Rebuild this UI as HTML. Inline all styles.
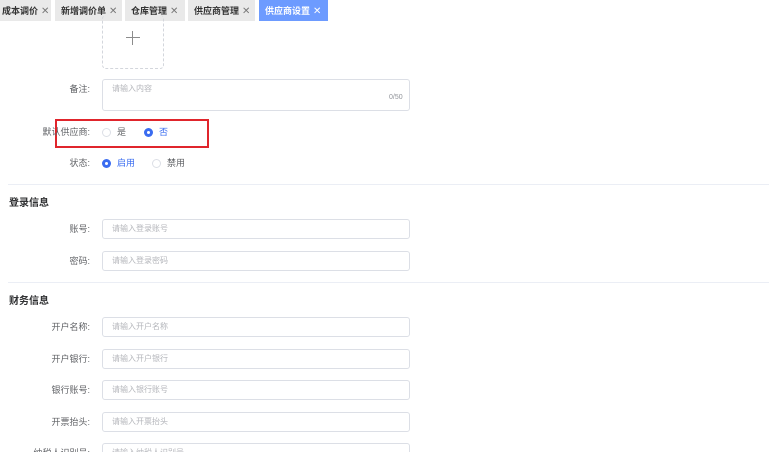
<!DOCTYPE html>
<html><head><meta charset="utf-8"><style>
*{margin:0;padding:0;box-sizing:border-box}
html,body{width:769px;height:452px;overflow:hidden}
body{background:#fff;font-family:"Liberation Sans","Noto Sans CJK SC",sans-serif;font-size:9px;color:#606266;position:relative}
.tabbar{position:absolute;left:0;top:0;width:769px;height:21px;background:#fff}
.tab{position:absolute;top:0;height:21px;background:#e9e9e9;color:#333;font-weight:bold;font-size:9px;line-height:22px;padding-left:6px}
.tab span{font-weight:normal;color:#777;margin-left:3px;font-size:10px}
.tab.act{background:#6d9bff;color:#fff}.tab.act span{color:#fff}
.a{position:absolute}
.lbl{position:absolute;right:679px;text-align:right;white-space:nowrap;color:#606266}
.inp{position:absolute;left:102px;width:308px;height:20px;border:1px solid #dcdfe6;border-radius:3px;color:#b4b6bb;padding-left:9px;line-height:18px;font-size:8px}
.hr{position:absolute;left:8px;right:0;height:1px;background:#ebeef5}
.h{position:absolute;left:9px;font-weight:bold;color:#303133;font-size:10px}
.r{position:absolute;width:9px;height:9px;border-radius:50%;border:1px solid #dcdfe6;background:#fff}
.r.on{border:none;background:#3a6cf0}
.r.on::after{content:"";position:absolute;left:3px;top:3px;width:3px;height:3px;border-radius:50%;background:#fff}
</style></head><body>
<div class="tabbar">
<div class="tab" style="left:-4px;width:55px">成本调价<span>✕</span></div>
<div class="tab" style="left:55px;width:67px">新增调价单<span>✕</span></div>
<div class="tab" style="left:125px;width:60px">仓库管理<span>✕</span></div>
<div class="tab" style="left:188px;width:67px">供应商管理<span>✕</span></div>
<div class="tab act" style="left:259px;width:69px">供应商设置<span>✕</span></div>
</div>
<div class="a" style="left:102px;top:15px;width:62px;height:54px;border:1px dashed #d3d6dc;border-top:none;border-radius:4px"></div>
<div class="a" style="left:126px;top:37px;width:14px;height:1px;background:#8c8c8c"></div>
<div class="a" style="left:132px;top:31px;width:1px;height:14px;background:#8c8c8c"></div>
<div class="lbl" style="top:82px">备注:</div>
<div class="inp" style="top:79px;height:32px;line-height:18px">请输入内容</div>
<div class="a" style="left:389px;top:94px;color:#909399;font-size:7px">0/50</div>
<div class="a" style="left:55px;top:119px;width:154px;height:29px;border:2px solid #e0252c"></div>
<div class="lbl" style="top:125px">默认供应商:</div>
<div class="r" style="left:102px;top:128px"></div><div class="a" style="left:117px;top:125px">是</div>
<div class="r on" style="left:144px;top:128px"></div><div class="a" style="left:159px;top:125px;color:#3a6cf0">否</div>
<div class="lbl" style="top:156px">状态:</div>
<div class="r on" style="left:102px;top:159px"></div><div class="a" style="left:117px;top:156px;color:#3a6cf0">启用</div>
<div class="r" style="left:152px;top:159px"></div><div class="a" style="left:167px;top:156px">禁用</div>
<div class="hr" style="top:184px"></div>
<div class="h" style="top:194px">登录信息</div>
<div class="lbl" style="top:222px">账号:</div><div class="inp" style="top:219px">请输入登录账号</div>
<div class="lbl" style="top:254px">密码:</div><div class="inp" style="top:251px">请输入登录密码</div>
<div class="hr" style="top:282px"></div>
<div class="h" style="top:292px">财务信息</div>
<div class="lbl" style="top:320px">开户名称:</div><div class="inp" style="top:317px">请输入开户名称</div>
<div class="lbl" style="top:352px">开户银行:</div><div class="inp" style="top:349px">请输入开户银行</div>
<div class="lbl" style="top:383px">银行账号:</div><div class="inp" style="top:380px">请输入银行账号</div>
<div class="lbl" style="top:415px">开票抬头:</div><div class="inp" style="top:412px">请输入开票抬头</div>
<div class="lbl" style="top:446px">纳税人识别号:</div><div class="inp" style="top:443px">请输入纳税人识别号</div>
</body></html>
